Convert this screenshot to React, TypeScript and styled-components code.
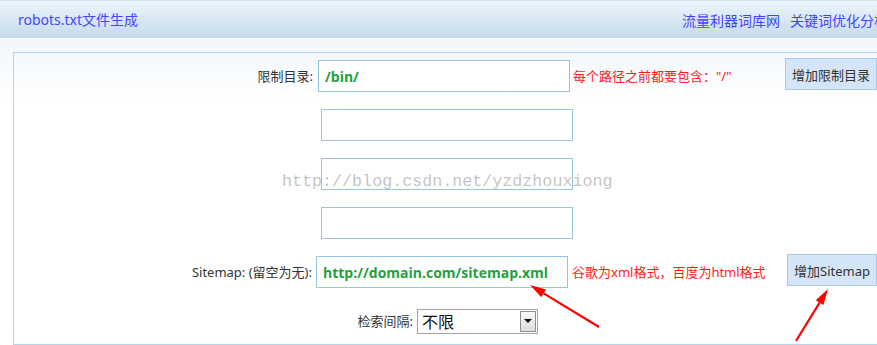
import React from 'react';
import styled, { createGlobalStyle } from 'styled-components';

const GlobalStyle = createGlobalStyle`
  html, body {
    margin: 0;
    padding: 0;
    overflow: hidden;
    background: #fff;
  }
  body {
    font-family: "Noto Sans", "Noto Sans CJK SC", sans-serif;
    font-size: 13px;
    color: #333;
  }
`;

const Page = styled.div`
  position: relative;
  width: 877px;
  height: 345px;
  overflow: hidden;
  background: linear-gradient(#eaf3fa 0px, #f3f8fc 50px, #fff 100px);
`;

const Header = styled.div`
  height: 37px;
  border-top: 1px solid #d3e2ee;
  border-bottom: 1px solid #f6fafd;
  background: linear-gradient(#edf5fb, #c4daeb);
  display: flex;
  align-items: center;
  justify-content: space-between;
  padding-left: 18px;
  white-space: nowrap;
`;

const HeaderLink = styled.a`
  color: #4444ff;
  font-size: 14px;
  line-height: 20px;
  text-decoration: none;
  font-family: "Noto Sans", "Noto Sans CJK SC", sans-serif;
`;

const HeaderLinks = styled.div`
  display: flex;
  gap: 10px;
  margin-right: -11px;
  padding-top: 2px;
`;

const Panel = styled.div`
  margin: 13px 0 0 13px;
  width: 900px;
  height: 284px;
  border: 1px solid #b8d5e7;
  border-right: none;
  padding-top: 7px;
  display: flex;
  flex-direction: column;
  gap: 17px;
`;

const Row = styled.div<{ $indent?: number }>`
  display: flex;
  align-items: center;
  height: 32px;
  padding-left: ${({ $indent }) => $indent ?? 0}px;
`;

const Label = styled.span<{ $width: number; $gap: number }>`
  width: ${({ $width }) => $width}px;
  margin-right: ${({ $gap }) => $gap}px;
  text-align: right;
  white-space: nowrap;
  line-height: 20px;
  color: #333;
`;

const TextInput = styled.div`
  box-sizing: border-box;
  width: 252px;
  height: 32px;
  border: 1px solid #96c5e1;
  background: #fff;
  display: flex;
  align-items: center;
  padding-left: 6px;
  font-family: "Open Sans", "Noto Sans", sans-serif;
  font-weight: bold;
  font-size: 14px;
  color: #25a040;
`;

const Hint = styled.span<{ $gap: number; $width: number }>`
  margin-left: ${({ $gap }) => $gap}px;
  width: ${({ $width }) => $width}px;
  color: #ff1a1a;
  white-space: nowrap;
  line-height: 20px;
`;

const Button = styled.button<{ $shift: number }>`
  box-sizing: border-box;
  height: 32px;
  padding: 0 6px;
  border: 1px solid #a9cae6;
  background: #d3e5f6;
  color: #333;
  font-family: "Noto Sans", "Noto Sans CJK SC", sans-serif;
  font-size: 13px;
  white-space: nowrap;
  align-self: flex-start;
  margin-top: ${({ $shift }) => $shift}px;
  cursor: pointer;
`;

const Select = styled.div`
  box-sizing: border-box;
  width: 121px;
  height: 25px;
  border: 1px solid #a3a3a3;
  background: #fff;
  display: flex;
  align-items: center;
  justify-content: space-between;
  padding: 0 1px 0 4px;
  font-size: 16px;
  color: #111;
  font-family: "Noto Sans CJK SC", sans-serif;
`;

const SelectArrow = styled.span`
  box-sizing: border-box;
  width: 16px;
  height: 21px;
  border: 1px solid #8d8d8d;
  background: linear-gradient(#fafafa, #dcdcdc);
  display: flex;
  align-items: center;
  justify-content: center;
  &::after {
    content: '';
    border-left: 4px solid transparent;
    border-right: 4px solid transparent;
    border-top: 4px solid #111;
  }
`;

const Watermark = styled.div`
  position: absolute;
  left: 282px;
  top: 172px;
  font-family: "Liberation Mono", monospace;
  font-size: 16.7px;
  line-height: 20px;
  color: rgba(170, 170, 170, 0.7);
  pointer-events: none;
  white-space: nowrap;
`;

const Overlay = styled.svg`
  position: absolute;
  left: 0;
  top: 0;
  pointer-events: none;
`;

const Arrow = ({ x1, y1, x2, y2 }: { x1: number; y1: number; x2: number; y2: number }) => {
  const ang = Math.atan2(y2 - y1, x2 - x1);
  const len = 16;
  const half = 4.5;
  const bx = x2 - Math.cos(ang) * len;
  const by = y2 - Math.sin(ang) * len;
  const px = -Math.sin(ang) * half;
  const py = Math.cos(ang) * half;
  return (
    <g>
      <line x1={x1} y1={y1} x2={bx} y2={by} stroke="#ff0000" strokeWidth={2.2} />
      <polygon
        points={`${x2},${y2} ${bx + px},${by + py} ${bx - px},${by - py}`}
        fill="#ff0000"
      />
    </g>
  );
};

export default function App() {
  return (
    <Page>
      <GlobalStyle />
      <Header>
        <HeaderLink href="#">robots.txt文件生成</HeaderLink>
        <HeaderLinks>
          <HeaderLink href="#">流量利器词库网</HeaderLink>
          <HeaderLink href="#">关键词优化分析</HeaderLink>
        </HeaderLinks>
      </Header>
      <Panel>
        <Row>
          <Label $width={299} $gap={5}>限制目录:</Label>
          <TextInput>/bin/</TextInput>
          <Hint $gap={3} $width={212}>每个路径之前都要包含："/"</Hint>
          <Button $shift={-2}>增加限制目录</Button>
        </Row>
        <Row $indent={307}>
          <TextInput />
        </Row>
        <Row $indent={307}>
          <TextInput />
        </Row>
        <Row $indent={307}>
          <TextInput />
        </Row>
        <Row>
          <Label $width={298} $gap={4}>Sitemap: (留空为无):</Label>
          <TextInput>http://domain.com/sitemap.xml</TextInput>
          <Hint $gap={4} $width={215}>谷歌为xml格式，百度为html格式</Hint>
          <Button $shift={-2}>增加Sitemap</Button>
        </Row>
        <Row>
          <Label $width={399} $gap={4}>检索间隔:</Label>
          <Select>
            不限
            <SelectArrow />
          </Select>
        </Row>
      </Panel>
      <Watermark>http://blog.csdn.net/yzdzhouxiong</Watermark>
      <Overlay width={877} height={345}>
        <Arrow x1={599} y1={327} x2={530} y2={285} />
        <Arrow x1={796} y1={341} x2={828} y2={289} />
      </Overlay>
    </Page>
  );
}
